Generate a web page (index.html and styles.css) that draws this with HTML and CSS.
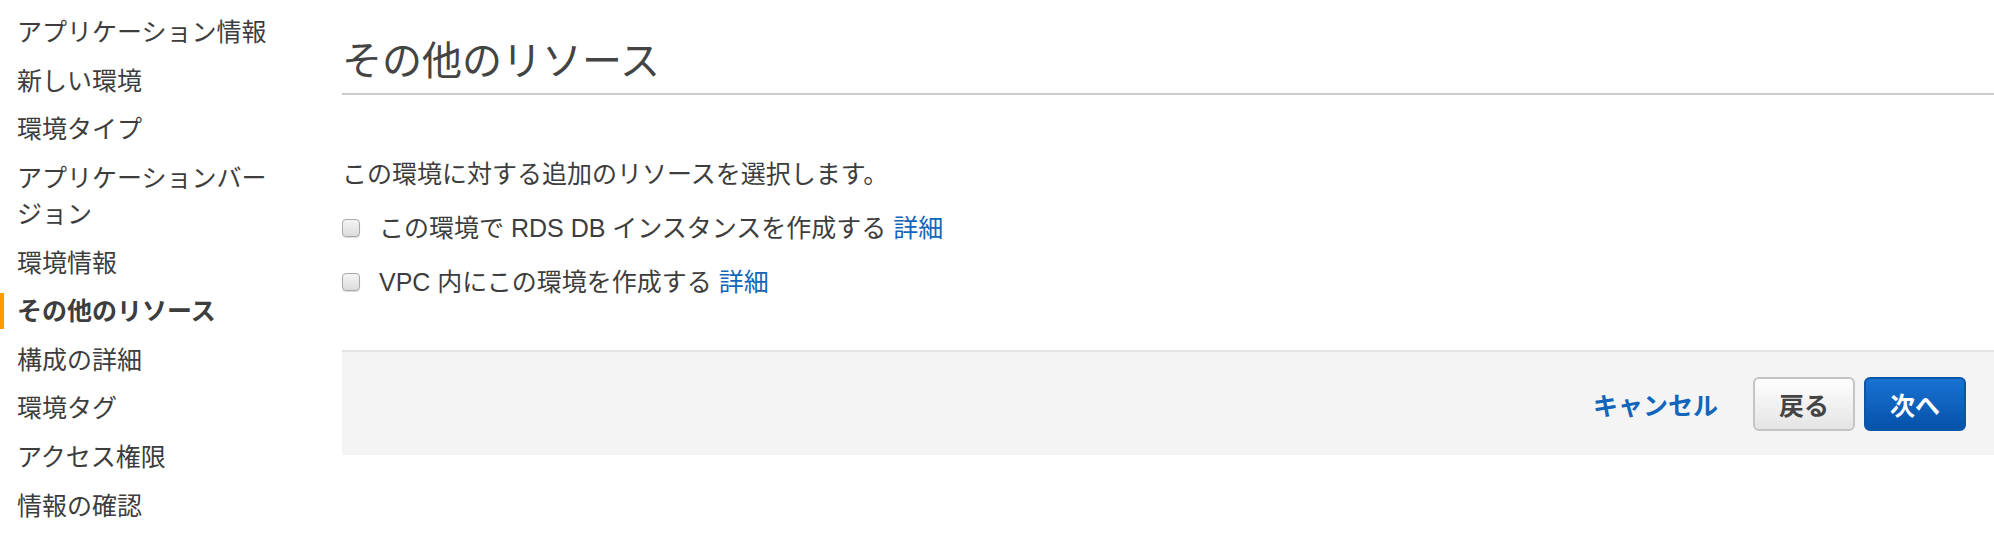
FILE: index.html
```html
<!DOCTYPE html>
<html lang="ja">
<head>
    <meta charset="UTF-8">
    <meta name="viewport" content="width=device-width, initial-scale=1.0">
    <title>その他のリソース</title>
    <link rel="stylesheet" href="styles.css">
</head>
<body>

<div class="wizard">
    <ul class="steps">
        <li><a href="#">アプリケーション情報</a></li>
        <li><a href="#">新しい環境</a></li>
        <li><a href="#">環境タイプ</a></li>
        <li><a href="#">アプリケーションバージョン</a></li>
        <li><a href="#">環境情報</a></li>
        <li class="active"><a href="#">その他のリソース</a></li>
        <li><a href="#">構成の詳細</a></li>
        <li><a href="#">環境タグ</a></li>
        <li><a href="#">アクセス権限</a></li>
        <li><a href="#">情報の確認</a></li>
    </ul>

    <div class="content">
        <h2>その他のリソース</h2>

        <p class="intro">この環境に対する追加のリソースを選択します。</p>

        <label class="option">
            <input type="checkbox" id="createRds">
            <span>この環境で RDS DB インスタンスを作成する <a href="#" class="more">詳細</a></span>
        </label>

        <label class="option">
            <input type="checkbox" id="createVpc">
            <span>VPC 内にこの環境を作成する <a href="#" class="more">詳細</a></span>
        </label>

        <div class="actions">
            <a href="#" class="cancel">キャンセル</a>
            <button class="btn btn-back">戻る</button>
            <button class="btn btn-next">次へ</button>
        </div>
    </div>
</div>

</body>
</html>
```

FILE: styles.css
```css
body {
    margin: 0;
    font-family: "Liberation Sans", "Noto Sans CJK JP", sans-serif;
    font-size: 25px;
    color: #3d3d3d;
    background-color: #fff;
}

a {
    text-decoration: none;
}

.wizard {
    display: flex;
}

.steps {
    list-style: none;
    margin: 0;
    padding: 8px 0 0 0;
    width: 342px;
    flex-shrink: 0;
    box-sizing: border-box;
    padding-right: 70px;
}

.steps li {
    padding: 6.3px 0;
}

.steps a {
    display: block;
    padding-left: 17px;
    line-height: 36px;
    color: #3d3d3d;
}

.steps .active a {
    font-weight: bold;
    border-left: 4px solid #ff9900;
    padding-left: 13px;
}

.content {
    flex: 1;
    padding-top: 37px;
}

h2 {
    margin: 0;
    font-size: 40px;
    font-weight: normal;
    line-height: 48px;
    color: #444;
    padding-bottom: 8px;
    border-bottom: 2px solid #cccccc;
}

.intro {
    margin: 61px 0 0 0;
    line-height: 36px;
}

.option {
    display: flex;
    align-items: center;
    padding-top: 18px;
    line-height: 36px;
}

.option input {
    appearance: none;
    -webkit-appearance: none;
    width: 18px;
    height: 18px;
    margin: 0 19px 0 0;
    border: 1px solid #a9a9a9;
    border-radius: 4px;
    background: linear-gradient(#f4f4f4, #dcdcdc);
    box-shadow: 0 1px 1px rgba(0, 0, 0, 0.15);
    box-sizing: border-box;
}

.more {
    color: #1166bb;
}

.actions {
    display: flex;
    justify-content: flex-end;
    align-items: center;
    margin-top: 50px;
    height: 103px;
    padding-right: 28px;
    background-color: #f4f4f4;
    border-top: 2px solid #e3e3e3;
}

.cancel {
    color: #1166bb;
    font-weight: bold;
    margin-right: 35px;
}

.btn {
    height: 54px;
    padding: 0 24px;
    font-family: inherit;
    font-size: 25px;
    font-weight: bold;
    border-radius: 6px;
    cursor: pointer;
}

.btn-back {
    color: #444;
    background: linear-gradient(#ffffff, #e4e4e4);
    border: 2px solid #c4c4c4;
    margin-right: 9px;
}

.btn-next {
    color: #fff;
    background: linear-gradient(#1a72d2, #0552aa);
    border: 2px solid #0b56a8;
}
```
